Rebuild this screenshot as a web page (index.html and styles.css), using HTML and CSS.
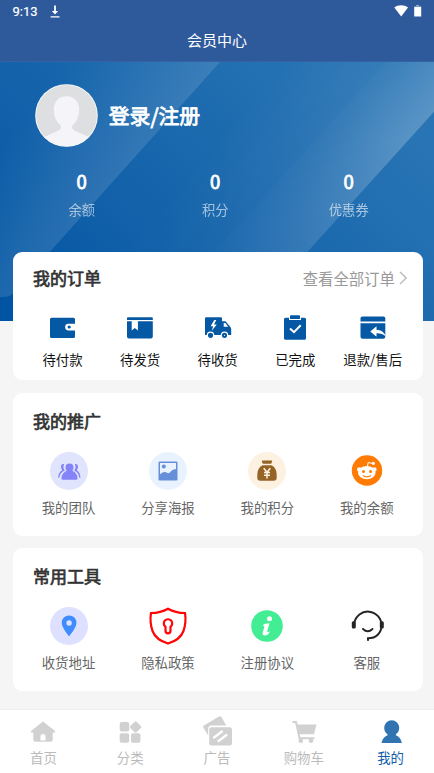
FILE: index.html
```html
<!DOCTYPE html>
<html lang="zh-CN">
<head>
<meta charset="utf-8">
<meta name="viewport" content="width=device-width, initial-scale=1">
<title>会员中心</title>
<link rel="stylesheet" href="styles.css">
</head>
<body>
<div class="app">
  <header class="topbar">
    <div class="status">
      <span class="clock">9:13</span>
      <svg class="download" width="10" height="14" viewBox="0 0 10 14"><path d="M4.100 .6h1.800v5.300h2.300L5 9.400 1.800 5.900h2.300zM.6 11.300h8.900v1.200H.6z" fill="#fff"/></svg>
      <svg class="signal" width="28" height="13" viewBox="0 0 28 13"><path d="M.3 2.600C4-.5 10.200-.5 14 2.600L7.200 11.400z" fill="#fff"/><path d="M20.200 1.700h7v9.800h-7z" fill="#fff"/><path d="M22 0h3.300v1.700H22z" fill="#8fa6cb"/></svg>
    </div>
    <h1 class="page-title">会员中心</h1>
  </header>

  <section class="hero">
    <svg class="hero-bg" width="434" height="260" viewBox="0 62 434 260" preserveAspectRatio="none">
      <defs>
        <linearGradient id="base" gradientUnits="userSpaceOnUse" x1="50" y1="350" x2="330" y2="60"><stop offset="0" stop-color="#0054a3"/><stop offset=".35" stop-color="#1160a9"/><stop offset="1" stop-color="#2874b4"/></linearGradient>
        <linearGradient id="s1" gradientUnits="userSpaceOnUse" x1="53" y1="84" x2="135" y2="157"><stop offset="0" stop-color="#fff" stop-opacity="0"/><stop offset="1" stop-color="#fff" stop-opacity=".12"/></linearGradient>
        <linearGradient id="s2" gradientUnits="userSpaceOnUse" x1="319" y1="135" x2="371" y2="182"><stop offset="0" stop-color="#fff" stop-opacity=".075"/><stop offset="1" stop-color="#fff" stop-opacity=".25"/></linearGradient>
        <linearGradient id="s3" gradientUnits="userSpaceOnUse" x1="262" y1="84" x2="318" y2="134"><stop offset="0" stop-color="#fff" stop-opacity="0"/><stop offset="1" stop-color="#fff" stop-opacity=".06"/></linearGradient>
        <linearGradient id="fade" x1="0" y1="0" x2="0" y2="1"><stop offset="0" stop-color="#fff"/><stop offset=".3" stop-color="#e8e8e8"/><stop offset=".75" stop-color="#777"/><stop offset="1" stop-color="#444"/></linearGradient>
        <mask id="fm" maskUnits="userSpaceOnUse" x="0" y="62" width="434" height="260"><path d="M0 62h434v260H0z" fill="url(#fade)"/></mask>
      </defs>
      <path d="M0 62h434v260H0z" fill="url(#base)"/>
      <path d="M0 62H220L12 295Q9 298 4 298H0z" fill="url(#s1)"/>
      <path d="M220 62H385L151 322H0z" fill="url(#s3)" mask="url(#fm)"/>
      <path d="M385 62H434V112L245 322H151z" fill="url(#s2)" mask="url(#fm)"/>
    </svg>
    <div class="profile">
      <svg class="avatar" width="63" height="63" viewBox="0 0 63 63"><defs><clipPath id="av"><circle cx="31.500" cy="31.500" r="30.800"/></clipPath></defs><circle cx="31.500" cy="31.500" r="31.300" fill="#fff"/><circle cx="31.500" cy="31.500" r="30.500" fill="#dedfe1"/><path clip-path="url(#av)" d="M31.500 12.300C23.500 12.300 18.800 18 18.800 26c0 7 3 12.500 6.700 15.300 1.500 2.700-.5 4.500-4 6.200L9 53v10h45V53l-12.500-5.500c-3.500-1.700-5.500-3.500-4-6.200C41.200 38.500 44.200 33 44.200 26c0-8-4.700-13.700-12.700-13.700z" fill="#f4f4f9"/></svg>
      <span class="login">登录/注册</span>
    </div>
    <div class="stats">
      <div class="stat"><b>0</b><span>余额</span></div>
      <div class="stat"><b>0</b><span>积分</span></div>
      <div class="stat"><b>0</b><span>优惠券</span></div>
    </div>
  </section>

  <main class="cards">
    <section class="card orders">
      <div class="card-head">
        <h2>我的订单</h2>
        <span class="more">查看全部订单<svg width="9" height="14" viewBox="0 0 9 14"><path d="M1 1 7.200 7 1 13" fill="none" stroke="#bbb" stroke-width="1.400"/></svg></span>
      </div>
      <div class="row">
        <div class="item"><svg width="28" height="26" viewBox="0 0 28 26"><path d="M2.500 2.700h22q1.500 0 1.500 1.500v4.500h-6.500a3.300 3.300 0 0 0 0 6.800H26v6q0 1.500-1.500 1.500h-22Q1 23 1 21.500V4.200Q1 2.700 2.500 2.700z" fill="#0558a4"/><circle cx="20.200" cy="12" r="1.600" fill="#0558a4"/></svg><span>待付款</span></div>
        <div class="item"><svg width="28" height="26" viewBox="0 0 28 26"><path d="M2 2.300h24q.800 0 .800.800v2H1v-2q0-.8 1-.8zM1 6.300h25.800v15.200q0 2-2 2H3q-2 0-2-2z" fill="#0558a4"/><path d="M5.700 6h6.200v9.500L8.800 13l-3.100 2.500z" fill="#fff"/></svg><span>待发货</span></div>
        <div class="item"><svg width="28" height="26" viewBox="0 0 28 26"><path d="M2 2.300h15q1 0 1 1v3h3.500l4.500 5.200q1.200 1 1.200 3V20H1V3.300q0-1 1-1z" fill="#0558a4"/><path d="M19.700 8h1.600l3 3.700h-4.600zM10.300 5 6.600 11.300H9.200L7.800 15.800 12.800 9.500H10L12.300 5z" fill="#fff"/><circle cx="6.500" cy="20.300" r="3.200" fill="#0558a4" stroke="#fff" stroke-width="1.200"/><circle cx="20.500" cy="20.300" r="3.200" fill="#0558a4" stroke="#fff" stroke-width="1.200"/><circle cx="20.500" cy="20.300" r=".6" fill="#fff"/></svg><span>待收货</span></div>
        <div class="item"><svg width="28" height="26" viewBox="0 0 28 26"><path d="M4.500 2.800H8V5h12V2.800h3.500q1.500 0 1.500 1.500v19q0 1.500-1.500 1.500h-19Q3 24.800 3 23.300v-19q0-1.500 1.500-1.500zM10 .3h8q1 0 1 1V4H9V1.300q0-1 1-1z" fill="#0558a4"/><path d="m9 13.500 4 3.700 6.700-7" fill="none" stroke="#fff" stroke-width="2"/></svg><span>已完成</span></div>
        <div class="item"><svg width="28" height="26" viewBox="0 0 28 26"><path d="M3.500 1.500h21q1.800 0 1.800 1.800v3.200H1.500V3.300q0-1.800 2-1.800zM1.500 8.200h24.800v13.600q0 2-2 2H3.500q-2 0-2-2z" fill="#0558a4"/><path d="m11.300 16.500 6.200-5.300v3.500q7 .3 9.300 6.800-4-3.500-9.300-3.200v3.500z" fill="#fff"/></svg><span>退款/售后</span></div>
      </div>
    </section>

    <section class="card grid-card">
      <div class="card-head"><h2>我的推广</h2></div>
      <div class="row">
        <div class="item"><svg width="40" height="40" viewBox="0 0 40 40"><circle cx="20" cy="20" r="19" fill="#e1e4fd"/><g fill="#8583f8"><path d="M15.200 13.200q-2.700-.8-3.200 1.900-.4 2.400 1.200 4.200-4 2-4 7.700 1.500-.1 1.700-2.300.7-3.700 5-5.300-2.600-2.900-.7-6.200zM25.800 13.200q2.700-.8 3.200 1.900.4 2.400-1.200 4.200 3.400 2 3.700 7.700-1.500-.1-1.700-2.300-.7-3.700-4.700-5.300 2.600-2.900.7-6.200z"/><circle cx="20.500" cy="16.500" r="4"/><path d="M18 19.500h5q5.500 2.500 5.500 7.800 0 1.500-1.500 1.500H14q-1.500 0-1.500-1.500 0-5.300 5.500-7.800z"/></g></svg><span>我的团队</span></div>
        <div class="item"><svg width="40" height="40" viewBox="0 0 40 40"><circle cx="20" cy="20" r="19" fill="#e8f3ff"/><rect x="10.500" y="10.500" width="19" height="19" rx="1.200" fill="#668fda"/><path d="M12 12h16v5.900q-3.500 0-5.300 2.700t-4.500.7q-2.700-1.200-6.200 2z" fill="#e8f3ff"/><circle cx="15.800" cy="15.600" r="2" fill="#668fda"/></svg><span>分享海报</span></div>
        <div class="item"><svg width="40" height="40" viewBox="0 0 40 40"><circle cx="20" cy="20" r="19" fill="#fdf2e1"/><path d="M15.500 9.500h9q.8 0 .7.800l-1 2.400h-8.400l-1-2.400q-.1-.8.700-.8zM15.500 14.300h9q5.200 2.500 5.200 10v2.500q0 3-3 3H13.300q-3 0-3-3v-2.500q0-7.500 5.200-10z" fill="#956326"/><path d="m16.700 17.200 3.300 4 3.300-4M20 21v6.500M17 21.500h6M17 24.200h6" fill="none" stroke="#fdf2e1" stroke-width="1.500"/></svg><span>我的积分</span></div>
        <div class="item"><svg width="40" height="40" viewBox="0 0 40 40"><circle cx="20" cy="19.500" r="15.200" fill="#ff7b03"/><g fill="#fff"><ellipse cx="19.800" cy="21.700" rx="8.800" ry="6.600"/><circle cx="12.300" cy="18.500" r="2.300"/><circle cx="27.300" cy="18.500" r="2.300"/><circle cx="26.300" cy="12.300" r="1.600"/></g><path d="m20.300 16 .9-4.500 4.500 1" fill="none" stroke="#fff"/><circle cx="16.500" cy="20.500" r="1.500" fill="#ff7b03"/><circle cx="23.500" cy="20.500" r="1.500" fill="#ff7b03"/><path d="M15.800 24.500q4.200 2.600 8.200 0" fill="none" stroke="#ff7b03" stroke-width="1.200"/></svg><span>我的余额</span></div>
      </div>
    </section>

    <section class="card grid-card">
      <div class="card-head"><h2>常用工具</h2></div>
      <div class="row">
        <div class="item"><svg width="40" height="40" viewBox="0 0 40 40"><circle cx="20" cy="20" r="19" fill="#dde1ff"/><path fill-rule="evenodd" d="M20.100 9.500a7.300 7.300 0 0 0-7.400 7.300c0 5 7.400 13.500 7.400 13.500s7.400-8.500 7.400-13.500a7.300 7.300 0 0 0-7.400-7.300zm0 4.800a2.700 2.700 0 1 1 0 5.400 2.700 2.700 0 0 1 0-5.400z" fill="#3f8cff"/></svg><span>收货地址</span></div>
        <div class="item"><svg width="40" height="40" viewBox="0 0 40 40"><g fill="none" stroke="#ff0505" stroke-width="2.200"><path d="M20 2.700Q27.500 7 37 7q1.500 9-1.500 18Q32 34 20 37.500 8 34 4.500 25 1.500 16 3 7q9.500 0 17-4.300z"/><path d="M17.500 20.800a4.200 4.200 0 1 1 5 0v4a2.500 2.500 0 0 1-5 0z"/></g></svg><span>隐私政策</span></div>
        <div class="item"><svg width="40" height="40" viewBox="0 0 40 40"><circle cx="20" cy="20" r="15.800" fill="#42ed94"/><circle cx="22.500" cy="12.800" r="2.500" fill="#fff"/><path d="M15.500 19.500q2-2.300 7-2.300l-2.300 8.300q-.3 1.600 2.800-.3-1.700 4.300-5.400 4.200-2.700-.3-1.900-3l1.600-5.200q.3-1.800-1.800-1.700z" fill="#fff"/></svg><span>注册协议</span></div>
        <div class="item"><svg width="40" height="40" viewBox="0 0 40 40"><g fill="none" stroke="#252525"><path d="M7.300 17a13.700 13.700 0 0 1 27.200 2.500C34.500 27 29 32.300 21 32.300v2.400" stroke-width="2"/><path d="M16 23q4.700 4.500 9.500 0" stroke-width="1.900" stroke-linecap="round"/></g><rect x="4.800" y="15.300" width="4" height="7.200" rx="1.500" fill="#252525"/><rect x="32.800" y="15.300" width="4" height="7.200" rx="1.500" fill="#252525"/></svg><span>客服</span></div>
      </div>
    </section>
  </main>

  <nav class="tabbar">
    <div class="tab"><svg width="30" height="30" viewBox="0 0 30 30"><path d="M15 3.500 27 13v1.500h-2.300v7.300q0 2-2 2H7.300q-2 0-2-2v-7.300H3V13zM12.500 22.500h5v-4a2.500 2.500 0 0 0-5 0z" fill-rule="evenodd" fill="#d1d1d1"/></svg><span>首页</span></div>
    <div class="tab"><svg width="30" height="30" viewBox="0 0 30 30"><g fill="#d1d1d1"><rect x="4.700" y="4" width="9.500" height="9.500" rx="2"/><rect x="4.700" y="15.300" width="9.500" height="9.500" rx="2"/><rect x="16" y="15.300" width="9.500" height="9.500" rx="2"/><rect x="16.200" y="4.600" width="8.800" height="8.800" rx="1.300" transform="rotate(45 20.600 9)"/></g></svg><span>分类</span></div>
    <div class="tab"><svg class="ad-icon" width="30" height="30" viewBox="0 0 30 30"><path d="M1.500 7.700 16.500-1.200q2-1.200 3.200.8l4.500 8H9.500q-3.300 0-3.300 3.500v6.500L1.300 9.500q-.5-1 .2-1.800z" fill="#d1d1d1"/><rect x="7.200" y="9.300" width="22.800" height="18.300" rx="2.500" fill="#d1d1d1"/><path d="m12 19.500 8-6M16.500 23l8-6" stroke="#fff" stroke-width="2.200" stroke-linecap="round"/></svg><span>广告</span></div>
    <div class="tab"><svg width="30" height="30" viewBox="0 0 30 30"><path d="M3.500 4H7l3.500 16.200h15" fill="none" stroke="#d1d1d1" stroke-width="2"/><path d="M7.500 6.500H27.500L25 16.300H9.700z" fill="#d1d1d1"/><circle cx="11.800" cy="22.700" r="2.300" fill="#d1d1d1"/><circle cx="22" cy="22.700" r="2.300" fill="#d1d1d1"/></svg><span>购物车</span></div>
    <div class="tab active"><svg width="30" height="30" viewBox="0 0 30 30"><path d="M15.700 2.300a7.500 7.500 0 0 0-7.500 7.500q0 4 3.300 6.500v1Q6.500 19.500 5.500 25h20.400q-1-5.500-6-7.700v-1q3.300-2.500 3.300-6.500a7.500 7.500 0 0 0-7.500-7.500z" fill="#3274b2"/></svg><span>我的</span></div>
  </nav>
</div>
</body>
</html>
```
FILE: styles.css
```css
* { box-sizing: border-box; }
body {
  margin: 0;
  background: #f5f5f5;
  font-family: Roboto, "Noto Sans CJK SC", sans-serif;
  color: #333;
}
h1, h2 { margin: 0; }
svg { display: block; flex: none; }
.app {
  width: 434px;
  height: 773px;
  display: flex;
  flex-direction: column;
  overflow: hidden;
}
.topbar {
  height: 62px;
  flex: none;
  background: #2e5a9c;
  border-bottom: 1px solid #3562a3;
  color: #fff;
}
.status {
  height: 23px;
  padding: 0 12px 0 12.5px;
  display: flex;
  align-items: center;
}
.clock { font-size: 13px; font-weight: 400; -webkit-text-stroke: .2px currentColor; }
.download { margin-left: 12px; }
.signal { margin-left: auto; }
.page-title {
  height: 36px;
  line-height: 36px;
  text-align: center;
  font-size: 15px;
  font-weight: 400;
}
.hero {
  position: relative;
  height: 259px;
  flex: none;
  padding: 21px 18.500px 0 15px;
  color: #fff;
}
.hero-bg {
  position: absolute;
  left: 0;
  top: 0;
  width: 100%;
  height: 100%;
}
.profile {
  position: relative;
  display: flex;
  align-items: center;
  gap: 10.500px;
  padding-left: 20.300px;
  height: 65px;
}
.login {
  margin-top: -1px;
  font-size: 20.800px;
  font-weight: 400;
  -webkit-text-stroke: .8px currentColor;
  font-family: "Noto Sans CJK SC", sans-serif;
}
.stats {
  position: relative;
  display: flex;
  margin-top: 18.500px;
}
.stat {
  flex: 1;
  display: flex;
  flex-direction: column;
  align-items: center;
  font-family: "Noto Sans CJK SC", sans-serif;
}
.stat b { font-size: 18.500px; line-height: 28px; font-weight: 400; -webkit-text-stroke: .8px currentColor; }
.stat span { font-size: 13.300px; line-height: 29px; opacity: .6; }
.cards {
  position: relative;
  margin: -68.700px 11.500px 0 12.800px;
  display: flex;
  flex-direction: column;
  gap: 12.500px;
  font-family: "Noto Sans CJK SC", sans-serif;
}
.card {
  background: #fff;
  border-radius: 9px;
}
.card-head {
  display: flex;
  justify-content: space-between;
  align-items: center;
  padding: 0 14.700px 0 20.200px;
}
.card h2 {
  font-size: 17px;
  line-height: 28px;
  font-weight: 400;
  -webkit-text-stroke: .7px currentColor;
  color: #333;
}
.more {
  display: flex;
  align-items: center;
  gap: 4px;
  font-size: 15.350px;
  line-height: 28px;
  color: #999;
}
.row { display: flex; }
.item {
  flex: 1;
  display: flex;
  flex-direction: column;
  align-items: center;
}
.item span { font-size: 13.400px; line-height: 20px; white-space: nowrap; }
.orders { height: 128px; padding-top: 11.200px; }
.orders .row { padding: 23px 11px 0; }
.orders .item span { margin-top: 8.500px; color: #111; }
.grid-card { height: 142.700px; padding-top: 14px; }
.grid-card .row { padding: 16px 6px 0; }
.grid-card .item span { margin-top: 6.300px; color: #666; }
.tabbar {
  margin-top: auto;
  height: 64px;
  flex: none;
  display: flex;
  background: #fff;
  border-top: 1px solid #efefef;
  font-family: "Noto Sans CJK SC", sans-serif;
}
.tab {
  flex: 1;
  display: flex;
  flex-direction: column;
  align-items: center;
  padding-top: 8px;
  font-size: 13.400px;
  line-height: 20px;
  color: #bbb;
}
.tab span { margin-top: -.8px; }
.ad-icon { overflow: visible; }
.active { color: #0f5ea8; }
```
